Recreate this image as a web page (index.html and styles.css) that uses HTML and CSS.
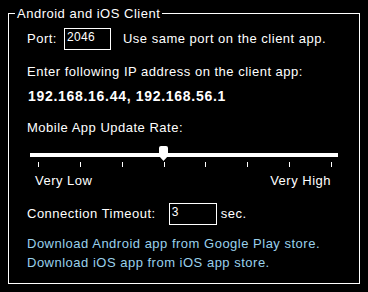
FILE: index.html
```html
<!DOCTYPE html>
<html>
<head>
<meta charset="utf-8">
<link rel="stylesheet" href="styles.css">
</head>
<body>
<fieldset class="group">
  <legend class="legend">Android and iOS Client</legend>
  <div class="row port-row">
    <span class="label">Port:</span>
    <span class="field port-field">2046</span>
    <span class="label hint">Use same port on the client app.</span>
  </div>
  <div class="line enter">Enter following IP address on the client app:</div>
  <div class="line ip">192.168.16.44, 192.168.56.1</div>
  <div class="line rate">Mobile App Update Rate:</div>
  <div class="slider">
    <div class="track"></div>
    <div class="thumb"></div>
    <div class="ticks">
      <i></i><i></i><i></i><i></i><i></i><i></i><i></i><i></i>
    </div>
    <div class="ends"><span>Very Low</span><span>Very High</span></div>
  </div>
  <div class="row timeout-row">
    <span class="label">Connection Timeout:</span>
    <span class="field timeout-field">3</span>
    <span class="label sec">sec.</span>
  </div>
  <div class="links">
    <div class="link">Download Android app from Google Play store.</div>
    <div class="link">Download iOS app from iOS app store.</div>
  </div>
</fieldset>
</body>
</html>
```

FILE: styles.css
```css
html, body {
  margin: 0;
  padding: 0;
  background: #000;
}
body {
  width: 368px;
  height: 292px;
  overflow: hidden;
  color: #fff;
  font-family: "Liberation Sans", Arial, sans-serif;
  font-size: 13px;
  line-height: 16px;
  letter-spacing: 0.5px;
}
.group {
  margin: 6px 0 0 8px;
  width: 352px;
  height: 278px;
  box-sizing: border-box;
  border: 1px solid #fff;
  padding: 0 20px 0 18px;
}
.legend {
  margin-left: -12px;
  padding: 0 2px;
  line-height: 15px;
}
.row {
  display: flex;
  align-items: center;
  height: 22px;
}
.port-row {
  margin-top: 7px;
}
.field {
  box-sizing: border-box;
  border: 1px solid #fff;
  height: 22px;
  font-size: 12px;
  line-height: 14px;
  letter-spacing: 0.3px;
  padding: 1px 0 0 2px;
  align-self: stretch;
}
.port-field {
  width: 47px;
  margin-left: 7px;
}
.hint {
  margin-left: 12px;
}
.enter {
  margin-top: 14px;
}
.ip {
  margin-top: 8px;
  margin-left: 1px;
  font-weight: bold;
  font-size: 14px;
  letter-spacing: 0.7px;
}
.rate {
  margin-top: 16px;
}
.slider {
  position: relative;
  width: 308px;
  margin: 17px 0 0 3px;
}
.track {
  height: 4px;
  background: #fff;
}
.thumb {
  position: absolute;
  left: 129px;
  top: -7px;
  width: 9px;
  height: 15px;
  background: #fff;
  border-radius: 2px 2px 0 0;
  clip-path: polygon(0 0, 100% 0, 100% 66%, 50% 100%, 0 66%);
}
.ticks {
  display: flex;
  justify-content: space-between;
  margin: 5px 0 0 0;
  padding: 0 6px 0 8px;
  height: 5px;
}
.ticks i {
  width: 1px;
  height: 5px;
  background: #fff;
}
.ends {
  display: flex;
  justify-content: space-between;
  margin-top: 6px;
  padding: 0 7px 0 5px;
}
.timeout-row {
  margin-top: 14px;
}
.timeout-field {
  width: 48px;
  margin-left: 13px;
}
.sec {
  margin-left: 4px;
}
.links {
  margin-top: 10px;
  color: #99d1ec;
  line-height: 18.5px;
}
```
